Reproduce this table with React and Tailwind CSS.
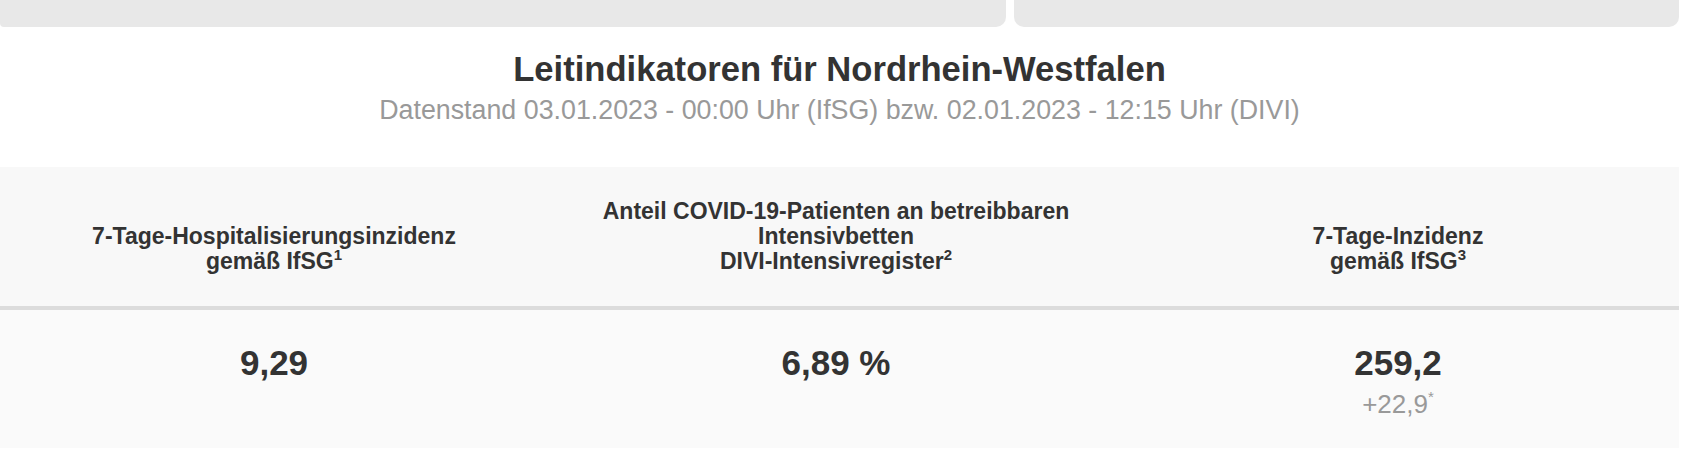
export default function App() {
  const font = { fontFamily: '"Liberation Sans", Arial, sans-serif' };
  return (
    <div className="w-[1692px] h-[460px] bg-white overflow-hidden" style={font}>
      <div className="w-[1679px]">
        <div className="flex gap-[8px] h-[27px]">
          <div className="w-[1006px] h-full bg-[#e8e8e8] rounded-br-[10px] rounded-bl-[4px]" />
          <div className="flex-1 h-full bg-[#e8e8e8] rounded-b-[10px]" />
        </div>
        <div className="mt-[21px] text-center">
          <h1 className="text-[34.6px] leading-[42px] font-bold text-[#333333]">
            Leitindikatoren für Nordrhein-Westfalen
          </h1>
          <p className="mt-[5px] text-[26.8px] leading-[30px] text-[#999999]">
            Datenstand 03.01.2023 - 00:00 Uhr (IfSG) bzw. 02.01.2023 - 12:15 Uhr (DIVI)
          </p>
        </div>
        <div className="mt-[42px]">
          <div className="grid grid-cols-[555px_562px_562px] h-[139px] bg-[#f8f8f8] text-[#333333] text-[23px] leading-[25px] font-bold text-center">
            <div className="flex flex-col items-center justify-end pb-[32px] pr-[7px]">
              <span>7-Tage-Hospitalisierungsinzidenz</span>
              <span>
                gemäß IfSG<sup className="text-[15px] relative -top-[9px]">1</sup>
              </span>
            </div>
            <div className="flex flex-col items-center justify-end pb-[32px]">
              <span>Anteil COVID-19-Patienten an betreibbaren</span>
              <span>Intensivbetten</span>
              <span>
                DIVI-Intensivregister<sup className="text-[15px] relative -top-[9px]">2</sup>
              </span>
            </div>
            <div className="flex flex-col items-center justify-end pb-[32px]">
              <span>7-Tage-Inzidenz</span>
              <span>
                gemäß IfSG<sup className="text-[15px] relative -top-[9px]">3</sup>
              </span>
            </div>
          </div>
          <div className="h-[4px] bg-[#dcdcdc]" />
          <div className="grid grid-cols-[555px_562px_562px] h-[138px] bg-[#fafafa] text-center pt-[32px]">
            <div className="pr-[7px]">
              <div className="text-[35px] leading-[42px] font-bold text-[#333333]">9,29</div>
            </div>
            <div>
              <div className="text-[35px] leading-[42px] font-bold text-[#333333]">6,89 %</div>
            </div>
            <div>
              <div className="text-[35px] leading-[42px] font-bold text-[#333333]">259,2</div>
              <div className="mt-[5px] text-[26px] leading-[30px] text-[#999999]">
                +22,9<sup className="text-[15px] relative -top-[11px]">*</sup>
              </div>
            </div>
          </div>
        </div>
      </div>
    </div>
  );
}
